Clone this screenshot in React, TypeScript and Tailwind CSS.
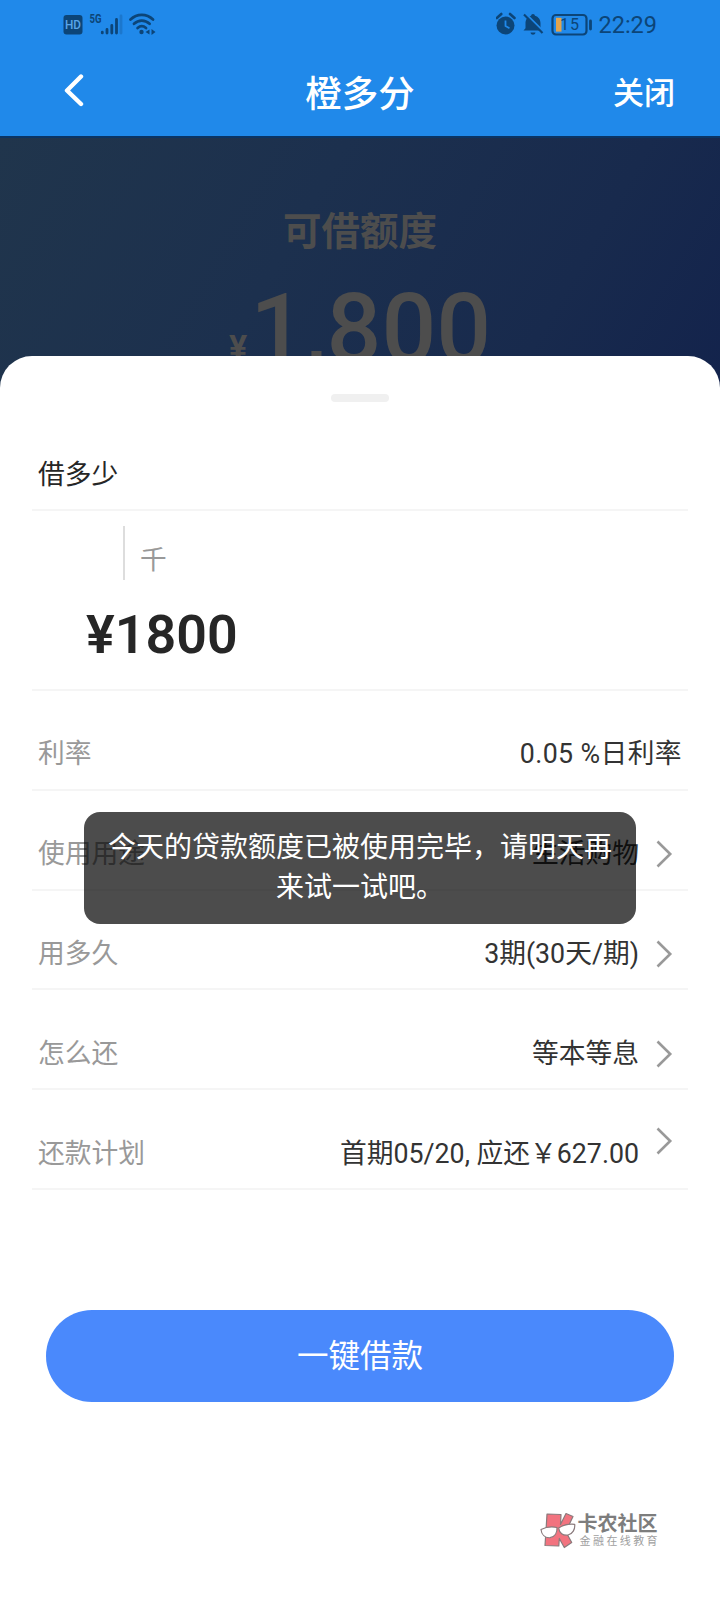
interface DetailRowProps {
  label: string;
  value: string;
  arrow?: boolean;
  arrowClass?: string;
  valueClass?: string;
}

function StatusBar() {
  return (
    <div className="flex h-12 items-center justify-between px-[63px] text-[#0c4578]">
      <svg width="94" height="24" viewBox="0 0 94 24" fill="none">
        <rect x="0.5" y="3" width="19" height="19.5" rx="3" fill="currentColor" />
        <text x="10" y="17" textAnchor="middle" fontSize="12.5" fontWeight="500" fill="#5aa5ea" fontFamily="Roboto, sans-serif" textLength="16" lengthAdjust="spacingAndGlyphs">
          HD
        </text>
        <text x="26.5" y="11" fontSize="12.5" fontWeight="700" fill="currentColor" fontFamily="Roboto, sans-serif" textLength="12" lengthAdjust="spacingAndGlyphs">
          5G
        </text>
        <g stroke="currentColor" strokeWidth="2.8" strokeLinecap="round">
          <path d="M39.3 20.2v.7M44 17.5v3.6M48.8 13.5v7.6M53.5 7.5v13.6" />
          <path d="M58 4v17" opacity="0.25" />
        </g>
        <g stroke="currentColor" strokeWidth="2.8" strokeLinecap="round">
          <path d="M67.5 7.5c6.5-6.2 16-6.2 22.5 0" />
          <path d="M71 11.8c4.6-4.2 11-4.2 15.6 0" />
          <path d="M74.6 16c2.6-2.3 5.8-2.3 8.4 0" />
        </g>
        <circle cx="78.5" cy="20" r="2.2" fill="currentColor" />
        <path d="M86.5 17.5v5l-4-2.5zM88.5 17v6l4-3z" fill="currentColor" />
      </svg>
      <div className="flex items-center">
        <svg width="98" height="24" viewBox="0 0 98 24" fill="none">
          <circle cx="9.5" cy="13.5" r="9" fill="currentColor" />
          <path d="M0.8 6l4.5-4M18.5 6l-4.5-4" stroke="currentColor" strokeWidth="2.6" strokeLinecap="round" />
          <path d="M9.5 8.5v5.500l4 2.300" stroke="#2089ea" strokeWidth="1.8" />
          <path d="M37 2a2 2 0 0 1 2 1.800c3.500 1 5.500 4 5.500 7.400v5l2 2.300H27.500l2-2.300v-5c0-3.400 2-6.400 5.500-7.400A2 2 0 0 1 37 2zM34.500 20.500h5c-.5 3-4.500 3-5 0z" fill="currentColor" />
          <path d="M29.5 1.5L48.5 20.5" stroke="#2089ea" strokeWidth="2" />
          <path d="M28 2.5L46.5 21" stroke="currentColor" strokeWidth="2.2" />
          <rect x="56.5" y="3" width="34" height="19.5" rx="3.5" stroke="currentColor" strokeWidth="2.2" />
          <rect x="60" y="5.8" width="5.5" height="13.8" fill="#e3a44c" />
          <text x="64" y="18" fontSize="16" fill="currentColor" fontFamily="Roboto, sans-serif" letterSpacing="1">
            15
          </text>
          <path d="M94.5 9v8" stroke="currentColor" strokeWidth="2.8" strokeLinecap="round" />
        </svg>
        <span className="ml-1 mt-[2px] text-[23.500px] leading-6">22:29</span>
      </div>
    </div>
  );
}

function NavBar() {
  return (
    <div className="grid h-[88px] grid-cols-3 items-center pl-[63px] pr-[45px] text-white">
      <svg className="-mt-1" width="22" height="34" viewBox="0 0 22 34" fill="none">
        <path d="M18 3.500L4 17.500L18 31" stroke="currentColor" strokeWidth="4.400" strokeLinecap="round" strokeLinejoin="round" />
      </svg>
      <h1 className="-ml-[18px] mt-1.5 text-center text-[36.500px] font-medium leading-none">橙多分</h1>
      <span className="mt-[3px] text-right text-[31px] font-medium leading-none">关闭</span>
    </div>
  );
}

function ArrowRight({ className = '' }: { className?: string }) {
  return (
    <svg className={`ml-[17px] mr-[7px] ${className}`} width="17" height="28" viewBox="0 0 17 28" fill="none">
      <path d="M1.500 1.500L14.200 14L1.500 26.500" stroke="#999" strokeWidth="2.600" />
    </svg>
  );
}

function DetailRow({ label, value, arrow, arrowClass, valueClass = '' }: DetailRowProps) {
  return (
    <div className="flex h-[99.800px] items-center justify-between border-b-2 border-[#f5f5f5] pl-1.5 pr-2 pt-[29px] text-[26.750px]">
      <span className="text-[#999]">{label}</span>
      <div className="flex items-center text-[#333]">
        <span className={valueClass}>{value}</span>
        {arrow && <ArrowRight className={arrowClass} />}
      </div>
    </div>
  );
}

function CommunityLogo() {
  return (
    <div className="flex items-center">
      <svg width="36" height="38" viewBox="0 0 36 38" strokeLinejoin="round" stroke="#8a7a7c" strokeWidth="1.2">
        <path d="M7 2l14 .5-.5 10L26 1.500l7 3-4.500 9.500-2.500 6 5.700 10.500-7.400 5-5-9-.5 7.500L5 33.500l1-15z" fill="#f2737f" />
        <path d="M1 17.500c5-2.500 11-3 16-2 .3 5-2 9.500-7 10.200-5 .3-8.500-3-9-8.200z" fill="#fff" />
        <path d="M18.700 16c4-2.800 10-4.200 16-3.700.5 5-2 9.700-6.700 10.700-5 .8-8.800-2-9.300-7z" fill="#fff" />
      </svg>
      <div className="ml-[2px] flex flex-col">
        <span className="text-[20px] font-bold leading-[22px] text-[#7d7d7d]">卡农社区</span>
        <span className="ml-[2px] mt-px text-[11px] leading-3 tracking-[2.400px] text-[#a0a0a0]">金融在线教育</span>
      </div>
    </div>
  );
}

export default function App() {
  return (
    <div className="relative flex h-[1600px] w-[720px] flex-col overflow-hidden bg-white font-['Roboto','Noto_Sans_CJK_SC',sans-serif]">
      <header className="h-[136px] shrink-0 bg-[#2089ea]">
        <StatusBar />
        <NavBar />
      </header>

      <section className="flex h-[260px] shrink-0 flex-col items-center border-t-2 border-[#0a3464] bg-[linear-gradient(120deg,#20354c_0%,#1c304e_40%,#182a4d_75%,#13234c_100%)] text-[#4d4d4d]">
        <h2 className="mt-[70px] text-[38.500px] font-bold leading-[48px]">可借额度</h2>
        <div className="mt-[17px] flex h-[112px] items-baseline font-medium leading-[112px]">
          <span className="relative -top-[3px] mr-[3px] text-[34px] font-bold">¥</span>
          <span className="text-[96.500px]">1,800</span>
        </div>
      </section>

      <main className="z-10 -mt-10 flex grow flex-col rounded-t-[32px] bg-white px-8">
        <div className="mx-auto mt-[38px] h-2 w-[58px] shrink-0 rounded bg-[#f0f0f0]" />

        <div className="flex h-[109px] shrink-0 items-end border-b-2 border-[#f5f5f5] pb-[14px] pl-1.5 text-[26.750px] leading-10 text-[#262626]">
          借多少
        </div>

        <div className="h-[180px] shrink-0 border-b-2 border-[#f5f5f5]">
          <div className="ml-[91px] mt-[15px] flex h-[54px] items-center border-l-2 border-[#ddd] pl-[15px] pt-[14px] text-[26.670px] text-[#999]">
            千
          </div>
          <div className="ml-[54px] mt-[24px] text-[53.800px] font-semibold leading-[62px] text-[#262626]">¥1800</div>
        </div>

        <DetailRow label="利率" value="0.05 %日利率" valueClass="-mr-[2px] tracking-[0.400px]" />
        <DetailRow label="使用用途" value="生活购物" arrow />
        <DetailRow label="用多久" value="3期(30天/期)" arrow />
        <DetailRow label="怎么还" value="等本等息" arrow />
        <DetailRow label="还款计划" value="首期05/20, 应还￥627.00" arrow arrowClass="-mt-[26px]" />

        <button className="mx-3.5 mt-[120px] h-[92px] shrink-0 rounded-full bg-[#4a89fc] pt-0.5 text-[31.500px] text-white">
          一键借款
        </button>

        <div className="mt-[110px] self-end pr-[28px]">
          <CommunityLogo />
        </div>
      </main>

      <div className="absolute left-[84px] top-[812px] z-20 w-[552px] rounded-2xl bg-black/70 px-6 py-4 text-center text-[28px] leading-10 text-white">
        今天的贷款额度已被使用完毕，请明天再来试一试吧。
      </div>
    </div>
  );
}
